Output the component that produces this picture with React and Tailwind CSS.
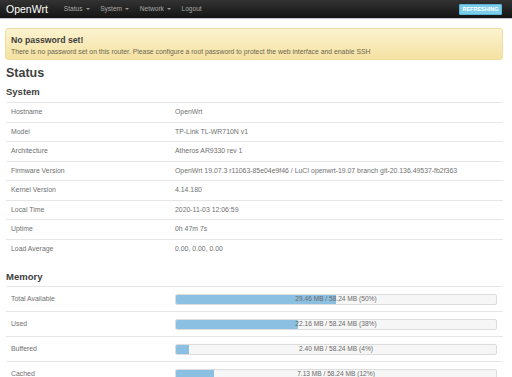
const systemRows = [
  ["Hostname", "OpenWrt"],
  ["Model", "TP-Link TL-WR710N v1"],
  ["Architecture", "Atheros AR9330 rev 1"],
  [
    "Firmware Version",
    "OpenWrt 19.07.3 r11063-85e04e9f46 / LuCI openwrt-19.07 branch git-20.136.49537-fb2f363",
  ],
  ["Kernel Version", "4.14.180"],
  ["Local Time", "2020-11-03 12:06:59"],
  ["Uptime", "0h 47m 7s"],
  ["Load Average", "0.00, 0.00, 0.00"],
];

const memoryRows = [
  ["Total Available", "29.46 MB / 58.24 MB (50%)", 50],
  ["Used", "22.16 MB / 58.24 MB (38%)", 38],
  ["Buffered", "2.40 MB / 58.24 MB (4%)", 4],
  ["Cached", "7.13 MB / 58.24 MB (12%)", 12],
];

function Caret() {
  return <span className="ml-[3px] inline-block border-x-[2px] border-t-[2.5px] border-x-transparent border-t-[#999] align-middle" />;
}

function NavBar() {
  return (
    <div className="flex h-[19px] items-center bg-gradient-to-b from-[#333333] to-[#151515] border-b border-[#c8c2d2] pl-[6px] pr-[10px]">
      <span className="text-[10.5px] text-white leading-none">OpenWrt</span>
      <nav className="ml-[16px] flex items-center gap-[10.6px] text-[6.6px] text-[#a8a8a8]">
        <span className="flex items-center">Status<Caret /></span>
        <span className="flex items-center">System<Caret /></span>
        <span className="flex items-center">Network<Caret /></span>
        <span>Logout</span>
      </nav>
      <span className="ml-auto rounded-[1px] border border-[#5ab4d6] bg-[#7ccdea] px-[2.5px] py-[1px] text-[5.5px] font-bold leading-[7px] text-white">
        REFRESHING
      </span>
    </div>
  );
}

export default function App() {
  return (
    <div className="h-[377px] w-[512px] overflow-hidden bg-white font-['Liberation_Sans',Arial,sans-serif]">
      <NavBar />

      <div className="px-[5px]">
        {/* Warning */}
        <div className="mt-[9px] mr-[4px] h-[32px] rounded-[3px] border border-[#efdca0] bg-gradient-to-b from-[#fbf3cf] to-[#f5e2a2] px-[5px] pt-[6px]">
          <p className="text-[8.7px] font-bold leading-[11px] text-[#3c3c3c]">No password set!</p>
          <p className="mt-[1px] whitespace-nowrap text-[6.85px] leading-[9px] text-[#6e6650]">
            There is no password set on this router. Please configure a root password to protect the web interface and enable SSH
          </p>
        </div>

        <h2 className="mt-[5px] pl-[1px] text-[12.5px] font-bold leading-[16px] text-[#404040]">Status</h2>
        <h3 className="mt-[5px] pl-[1px] text-[9.5px] font-bold leading-[12px] text-[#404040]">System</h3>

        <div className="mt-[4px] ml-[1px] w-[497px]">
          {systemRows.map(([label, value]) => (
            <div key={label} className="flex h-[19.5px] items-center border-t border-[#e6e6e6] text-[6.9px] text-[#707070]">
              <span className="w-[169px] pl-[5px]">{label}</span>
              <span className="whitespace-nowrap">{value}</span>
            </div>
          ))}
        </div>

        <h3 className="mt-[13px] pl-[1px] text-[9.5px] font-bold leading-[12px] text-[#404040]">Memory</h3>

        <div className="mt-[3px] ml-[1px] w-[497px]">
          {memoryRows.map(([label, value, pct]) => (
            <div key={label} className="flex h-[25px] items-center border-t border-[#e6e6e6] text-[6.9px] text-[#707070]">
              <span className="w-[169px] pl-[5px]">{label}</span>
              <div className="relative h-[11px] w-[322px] overflow-hidden rounded-[2px] border border-[#dcdcdc] bg-[#f6f6f6]">
                <div className="h-full bg-[#8cc0e2]" style={{ width: `${pct}%` }} />
                <span className="absolute inset-0 flex items-center justify-center text-[6.6px] text-[#6a6a6a]">{value}</span>
              </div>
            </div>
          ))}
        </div>
      </div>
    </div>
  );
}
